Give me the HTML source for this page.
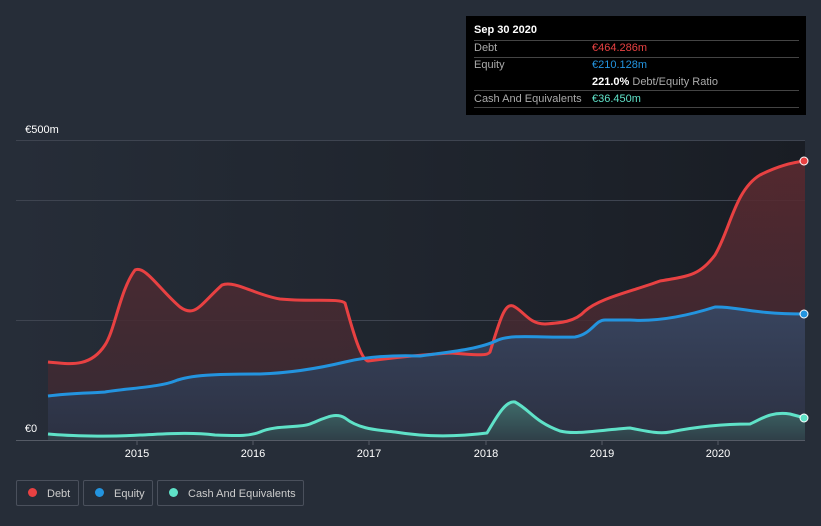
<!DOCTYPE html>
<html><head><meta charset="utf-8"><style>
html,body{margin:0;width:821px;height:526px;overflow:hidden}
body{background:#262d38;font-family:"Liberation Sans",sans-serif;position:relative}
.tip{position:absolute;left:466px;top:16px;width:340px;height:99px;background:#000;color:#fff;font-size:11px}
.tip .r{position:absolute;left:8px;width:325px;border-top:1px solid #444}
.lab{color:#aaa;position:absolute;left:8px}
.val{position:absolute;left:126px}
.leg{position:absolute;top:480px;height:26px;border:1px solid #4a505c;border-radius:2px;color:#ccc;font-size:11px;line-height:26px;box-sizing:border-box;white-space:nowrap;overflow:hidden}
.leg i{display:inline-block;width:9px;height:9px;border-radius:50%;margin:0 10px 0 11px;vertical-align:-0px}
</style></head><body>
<svg width="821" height="526" style="position:absolute;left:0;top:0">
<defs>
<linearGradient id="bg" x1="0" x2="1" y1="0" y2="0"><stop offset="0" stop-color="#262d38"/><stop offset="1" stop-color="#191d24"/></linearGradient>
<linearGradient id="df" x1="0" x2="0" y1="0" y2="1"><stop offset="0" stop-color="#5a2a30" stop-opacity=".9"/><stop offset="1" stop-color="#3a2a33" stop-opacity=".8"/></linearGradient>
<linearGradient id="ef" x1="0" x2="0" y1="0" y2="1"><stop offset="0" stop-color="#38445e"/><stop offset="1" stop-color="#2c3142"/></linearGradient>
<linearGradient id="cf" x1="0" x2="0" y1="0" y2="1"><stop offset="0" stop-color="#3f6b6a"/><stop offset="1" stop-color="#2f3f48"/></linearGradient>
</defs>
<rect x="16" y="140" width="789" height="300" fill="url(#bg)"/>
<g stroke="#3e4450" stroke-width="1"><line x1="16" y1="140.5" x2="805" y2="140.5"/><line x1="16" y1="200.5" x2="805" y2="200.5"/><line x1="16" y1="320.5" x2="805" y2="320.5"/></g>
<path fill="url(#df)" d="M48,362 C70,364 90,368 105,345 C115,330 120,290 135,270 C145,265 160,290 180,307 C195,318 200,305 222,285 C235,280 255,295 280,299 C310,302 340,298 345,303 C350,320 360,360 368,361 C390,358 420,355 450,353 C470,354 487,357 490,352 C500,320 505,300 515,307 C525,313 530,324 545,324 C560,323 575,322 585,311 C600,298 630,292 660,281 C690,276 700,275 715,255 C730,230 735,190 760,175 C780,165 795,162 805,161 L805,440 L48,440Z"/>
<path fill="url(#ef)" d="M48,396 C70,393 95,393 105,392 C130,388 160,387 175,381 C190,375 215,374 260,374 C290,373 320,368 345,362 C365,357 390,355 420,356 C450,352 480,349 498,340 C512,334 540,338 575,337 C592,334 595,320 605,320 L630,320 C660,322 690,315 715,307 C735,306 750,314 805,314 L805,440 L48,440Z"/>
<path fill="url(#cf)" d="M48,434 C70,436 110,437 140,435 C165,434 190,432 215,435 C240,436 250,436 260,432 C275,425 300,428 310,424 C325,418 335,412 345,418 C360,430 380,430 395,432 C425,437 455,437 487,433 C495,420 505,400 515,402 C530,410 535,422 560,431 C575,435 600,430 630,428 C650,432 660,434 670,432 C690,428 715,424 750,424 C760,420 770,411 790,414 L805,418 L805,440 L48,440Z"/>
<g fill="none" stroke-width="3" stroke-linejoin="round">
<path stroke="#e84142" d="M48,362 C70,364 90,368 105,345 C115,330 120,290 135,270 C145,265 160,290 180,307 C195,318 200,305 222,285 C235,280 255,295 280,299 C310,302 340,298 345,303 C350,320 360,360 368,361 C390,358 420,355 450,353 C470,354 487,357 490,352 C500,320 505,300 515,307 C525,313 530,324 545,324 C560,323 575,322 585,311 C600,298 630,292 660,281 C690,276 700,275 715,255 C730,230 735,190 760,175 C780,165 795,162 805,161"/>
<path stroke="#2394df" d="M48,396 C70,393 95,393 105,392 C130,388 160,387 175,381 C190,375 215,374 260,374 C290,373 320,368 345,362 C365,357 390,355 420,356 C450,352 480,349 498,340 C512,334 540,338 575,337 C592,334 595,320 605,320 L630,320 C660,322 690,315 715,307 C735,306 750,314 805,314"/>
<path stroke="#5fe2c8" d="M48,434 C70,436 110,437 140,435 C165,434 190,432 215,435 C240,436 250,436 260,432 C275,425 300,428 310,424 C325,418 335,412 345,418 C360,430 380,430 395,432 C425,437 455,437 487,433 C495,420 505,400 515,402 C530,410 535,422 560,431 C575,435 600,430 630,428 C650,432 660,434 670,432 C690,428 715,424 750,424 C760,420 770,411 790,414 L805,418"/>
</g>
<circle cx="804" cy="161" r="4" fill="#e84142" stroke="#fff" stroke-width="1"/>
<circle cx="804" cy="314" r="4" fill="#2394df" stroke="#fff" stroke-width="1"/>
<circle cx="804" cy="418" r="4" fill="#5fe2c8" stroke="#fff" stroke-width="1"/>
<line x1="16" y1="440.5" x2="805" y2="440.5" stroke="#555b66"/>
<g stroke="#555b66"><line x1="137" y1="440" x2="137" y2="445"/><line x1="253" y1="440" x2="253" y2="445"/><line x1="369" y1="440" x2="369" y2="445"/><line x1="486" y1="440" x2="486" y2="445"/><line x1="602" y1="440" x2="602" y2="445"/><line x1="718" y1="440" x2="718" y2="445"/></g>
<g fill="#fff" font-size="11" font-family="Liberation Sans,sans-serif" text-anchor="middle">
<text x="137" y="457">2015</text><text x="253" y="457">2016</text><text x="369" y="457">2017</text><text x="486" y="457">2018</text><text x="602" y="457">2019</text><text x="718" y="457">2020</text>
<text x="42" y="133">€500m</text><text x="31" y="432">€0</text>
</g>
</svg>
<div class="tip">
<div style="position:absolute;left:8px;top:8px;font-weight:bold">Sep 30 2020</div>
<div class="r" style="top:24px"></div>
<div class="lab" style="top:26px">Debt</div><div class="val" style="top:26px;color:#e84142">€464.286m</div>
<div class="r" style="top:41px"></div>
<div class="lab" style="top:43px">Equity</div><div class="val" style="top:43px;color:#2394df">€210.128m</div>
<div class="val" style="top:60px"><b>221.0%</b> <span style="color:#aaa">Debt/Equity Ratio</span></div>
<div class="r" style="top:74px"></div>
<div class="lab" style="top:77px">Cash And Equivalents</div><div class="val" style="top:77px;color:#5fe2c8">€36.450m</div>
<div class="r" style="top:91px"></div>
</div>
<div class="leg" style="left:16px;width:63px"><i style="background:#e84142"></i>Debt</div>
<div class="leg" style="left:83px;width:70px"><i style="background:#2394df"></i>Equity</div>
<div class="leg" style="left:157px;width:147px"><i style="background:#5fe2c8"></i>Cash And Equivalents</div>
</body></html>
